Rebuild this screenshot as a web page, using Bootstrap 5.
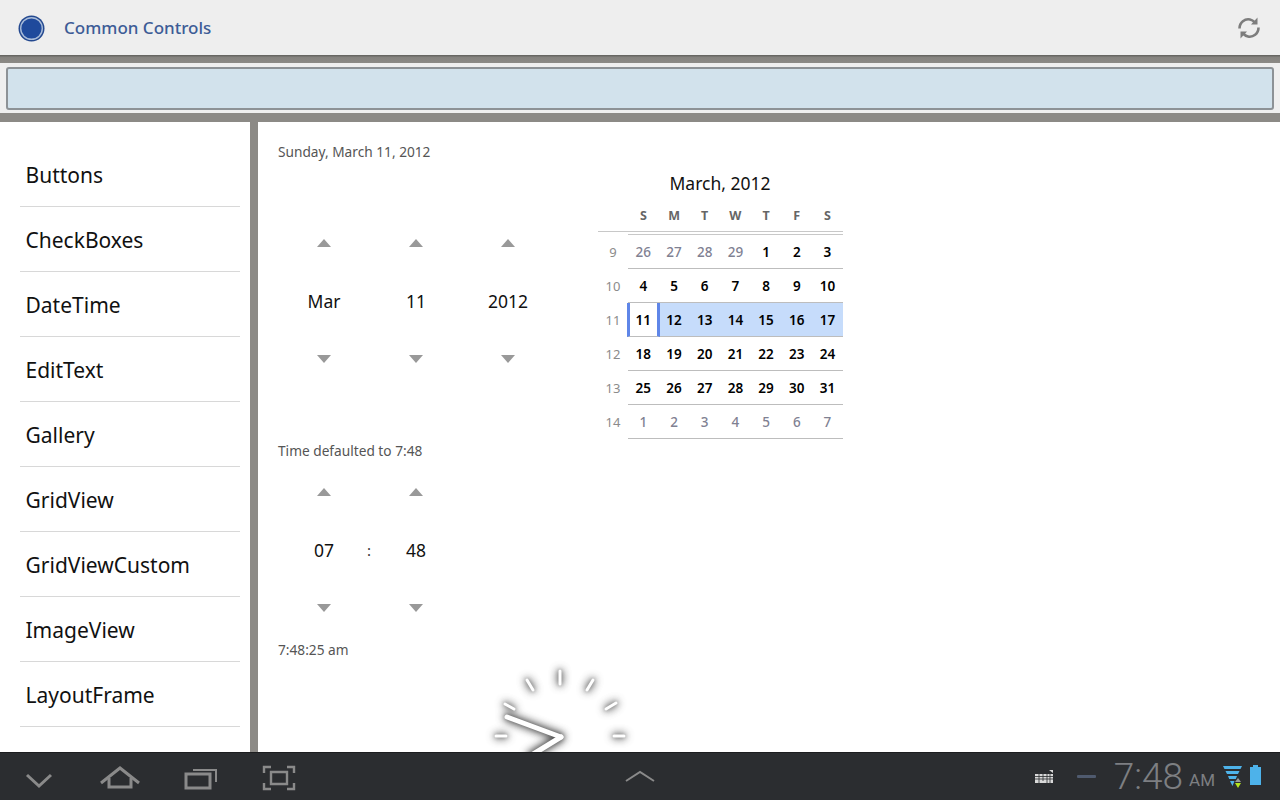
<!DOCTYPE html>
<html lang="en">
<head>
    <meta charset="UTF-8">
    <meta name="viewport" content="width=device-width, initial-scale=1.0">
    <title>Common Controls</title>
    <link href="https://cdn.jsdelivr.net/npm/bootstrap@5.3.2/dist/css/bootstrap.min.css" rel="stylesheet">
    <style>
        html, body { height: 100%; }
        body {
            height: 800px;
            overflow: hidden;
            background: #fff;
            font-family: "Noto Sans", "Open Sans", sans-serif;
            color: #111;
        }
        .app-bar { height: 55px; background: #eeeeee; padding: 1px 19px 0 18px; }
        .app-title { font-size: 17px; font-weight: 500; color: #3d5c96; margin-left: 19px; }
        .band-dark { height: 8px; background: linear-gradient(#5f5e5b, #85837f 30%, #8c8a86); }
        .field-wrap { background: #efefef; padding: 4px 6px 3px; }
        .blue-field {
            height: 43px;
            background: #d2e2ec;
            border: 2px solid #8d9296;
            border-radius: 3px;
        }
        .band-mid { height: 9px; background: #8c8a86; }
        .main-area { height: 630px; overflow: hidden; }
        .menu-col { width: 250px; padding: 20px 10px 0 20px; overflow: hidden; flex: none; }
        .menu-item {
            height: 65px;
            padding: 3px 0 0 5.5px;
            border: 0;
            border-bottom: 1px solid #d8d8d8;
            border-radius: 0;
            font-size: 21px;
            color: #111;
            display: flex;
            align-items: center;
            white-space: nowrap;
        }
        .menu-rule { width: 8px; background: #8c8a86; flex: none; }
        .form-col { width: 340px; padding: 20px 0 0 20px; flex: none; }
        .small-label { font-size: 13.7px; line-height: 20px; color: #555; }
        .spin-row { height: 279px; }
        .spin-row.time-spin { height: 179px; }
        .spin-col { width: 92px; padding-top: 77px; text-align: center; flex: none; }
        .time-spin .spin-col { padding-top: 27px; }
        .spin-text { font-size: 17.5px; line-height: 24px; margin: 42px 0; color: #111; height: 24px; }
        .arrow-up, .arrow-dn { width: 14px; height: 8px; display: block; margin: 0 auto; background: #999; }
        .arrow-up { clip-path: polygon(50% 0, 100% 100%, 0 100%); }
        .arrow-dn { clip-path: polygon(0 0, 100% 0, 50% 100%); }
        .colon-mark { position: relative; }
        .colon-mark::after {
            content: ":";
            position: absolute;
            right: -1px;
            top: 79px;
            font-size: 15px;
            line-height: 20px;
            color: #333;
        }
        .clock-face { display: block; margin-left: 202px; overflow: hidden; }
        .clock-face g { filter: drop-shadow(0 0 4px #333) drop-shadow(0 0 2px #888); }
        .cal-col { width: 245px; padding-top: 49px; flex: none; }
        .cal-title { font-size: 17.5px; line-height: 24px; text-align: center; margin-left: -1px; margin-bottom: 9px; }
        .cal-grid {
            display: grid;
            grid-template-columns: 30px repeat(7, 30.7px);
        }
        .cal-head {
            font-size: 12.5px;
            font-weight: 700;
            color: #666;
            text-align: center;
            line-height: 20px;
            padding-top: 2px;
            padding-bottom: 5px;
            border-bottom: 1px solid #c8c8c8;
        }
        .cal-rule { height: 3px; border-bottom: 1px solid #c8c8c8; margin-left: 30px; }
        .cal-wk { font-size: 13px; color: #8b8b8b; text-align: center; line-height: 34px; height: 34px; }
        .cal-day {
            font-size: 13.5px;
            font-weight: 600;
            color: #000;
            text-align: center;
            line-height: 33px;
            padding-top: 1px;
            height: 34px;
            border-bottom: 1px solid #bdbdbd;
        }
        .cal-day.out { color: #7f8192; font-weight: 500; }
        .cal-day.sel { background: #c6dcfb; }
        .cal-day.cur {
            position: relative;
            z-index: 1;
            background: #fff;
            border-left: 3px solid #5f86e8;
            border-right: 3px solid #5f86e8;
            margin-left: -1px;
            margin-right: -1px;
        }
        .sys-bar { height: 48px; background: #2b2d30; border-top: 1px solid #1c1d1f; padding: 0 19px 0 25px; flex: none; }
        .sys-left { width: 271px; }
        .sys-up { margin-left: 329px; }
        .sys-minus { margin-left: 23px; }
        .sys-clock { font-family: Roboto, "Noto Sans", sans-serif; font-weight: 300; font-size: 37px; color: #7d7f82; line-height: 48px; margin-left: 18px; }
        .sys-ampm { font-family: Roboto, "Noto Sans", sans-serif; font-size: 17px; color: #7d7f82; margin-left: 6px; margin-top: 9px; }
        .sys-battery { margin-left: 7px; margin-top: -3px; }
    </style>
</head>
<body class="d-flex flex-column">
    <nav class="app-bar d-flex align-items-center">
        <svg width="27" height="27" viewBox="0 0 27 27">
            <circle cx="13.5" cy="13.5" r="13" fill="#23488f"/>
            <circle cx="13.5" cy="13.5" r="10.8" fill="#1f4a9c" stroke="#a9bcd9" stroke-width="1.4"/>
        </svg>
        <span class="app-title">Common Controls</span>
        <svg class="ms-auto" width="24" height="24" viewBox="0 0 24 24" fill="none" stroke="#7d7d7d" stroke-width="2.6">
            <path d="M2.5 12.5 C2.5 6 8 2.5 13 3.5 C15 3.9 16.5 5 18 6.5"/>
            <path d="M21.5 11.5 C21.5 18 16 21.5 11 20.5 C9 20.1 7.5 19 6 17.5"/>
            <path d="M20.5 1.5 V8.5 H14" fill="#7d7d7d" stroke="none"/>
            <path d="M3.5 22.5 V15.5 H10" fill="#7d7d7d" stroke="none"/>
        </svg>
    </nav>
    <div class="band-dark"></div>
    <div class="field-wrap"><div class="blue-field"></div></div>
    <div class="band-mid"></div>

    <div class="main-area d-flex">
        <div class="menu-col">
            <div class="list-group list-group-flush">
                <div class="list-group-item menu-item">Buttons</div>
                <div class="list-group-item menu-item">CheckBoxes</div>
                <div class="list-group-item menu-item">DateTime</div>
                <div class="list-group-item menu-item">EditText</div>
                <div class="list-group-item menu-item">Gallery</div>
                <div class="list-group-item menu-item">GridView</div>
                <div class="list-group-item menu-item">GridViewCustom</div>
                <div class="list-group-item menu-item">ImageView</div>
                <div class="list-group-item menu-item">LayoutFrame</div>
                <div class="list-group-item menu-item">LayoutRelative</div>
            </div>
        </div>
        <div class="menu-rule"></div>

        <div class="form-col">
            <div class="small-label">Sunday, March 11, 2012</div>
            <div class="d-flex spin-row">
                <div class="spin-col"><span class="arrow-up"></span><div class="spin-text">Mar</div><span class="arrow-dn"></span></div>
                <div class="spin-col"><span class="arrow-up"></span><div class="spin-text">11</div><span class="arrow-dn"></span></div>
                <div class="spin-col"><span class="arrow-up"></span><div class="spin-text">2012</div><span class="arrow-dn"></span></div>
            </div>
            <div class="small-label">Time defaulted to 7:48</div>
            <div class="d-flex spin-row time-spin">
                <div class="spin-col colon-mark"><span class="arrow-up"></span><div class="spin-text">07</div><span class="arrow-dn"></span></div>
                <div class="spin-col"><span class="arrow-up"></span><div class="spin-text">48</div><span class="arrow-dn"></span></div>
            </div>
            <div class="small-label">7:48:25 am</div>
            <svg class="clock-face" width="160" height="100" viewBox="480 660 160 100">
                <g stroke="#fff" stroke-linecap="round">
                    <line x1="560" y1="671" x2="560" y2="684" stroke-width="3"/>
                    <line x1="527" y1="680" x2="533" y2="690" stroke-width="3"/>
                    <line x1="593" y1="680" x2="587" y2="690" stroke-width="3"/>
                    <line x1="505" y1="704" x2="514" y2="709" stroke-width="3"/>
                    <line x1="616" y1="703" x2="606" y2="709" stroke-width="3"/>
                    <line x1="496" y1="736" x2="506" y2="736" stroke-width="3"/>
                    <line x1="614" y1="736" x2="624" y2="736" stroke-width="3"/>
                    <line x1="507" y1="717" x2="561" y2="737" stroke-width="5"/>
                    <line x1="561" y1="737" x2="530" y2="756" stroke-width="5"/>
                </g>
            </svg>
        </div>

        <div class="cal-col">
            <div class="cal-title">March, 2012</div>
            <div class="cal-grid">
                <div class="cal-head"></div><div class="cal-head">S</div><div class="cal-head">M</div><div class="cal-head">T</div><div class="cal-head">W</div><div class="cal-head">T</div><div class="cal-head">F</div><div class="cal-head">S</div>
            </div>
            <div class="cal-rule"></div>
            <div class="cal-grid">
                <div class="cal-wk">9</div><div class="cal-day out">26</div><div class="cal-day out">27</div><div class="cal-day out">28</div><div class="cal-day out">29</div><div class="cal-day">1</div><div class="cal-day">2</div><div class="cal-day">3</div>
                <div class="cal-wk">10</div><div class="cal-day">4</div><div class="cal-day">5</div><div class="cal-day">6</div><div class="cal-day">7</div><div class="cal-day">8</div><div class="cal-day">9</div><div class="cal-day">10</div>
                <div class="cal-wk">11</div><div class="cal-day cur">11</div><div class="cal-day sel">12</div><div class="cal-day sel">13</div><div class="cal-day sel">14</div><div class="cal-day sel">15</div><div class="cal-day sel">16</div><div class="cal-day sel">17</div>
                <div class="cal-wk">12</div><div class="cal-day">18</div><div class="cal-day">19</div><div class="cal-day">20</div><div class="cal-day">21</div><div class="cal-day">22</div><div class="cal-day">23</div><div class="cal-day">24</div>
                <div class="cal-wk">13</div><div class="cal-day">25</div><div class="cal-day">26</div><div class="cal-day">27</div><div class="cal-day">28</div><div class="cal-day">29</div><div class="cal-day">30</div><div class="cal-day">31</div>
                <div class="cal-wk">14</div><div class="cal-day out">1</div><div class="cal-day out">2</div><div class="cal-day out">3</div><div class="cal-day out">4</div><div class="cal-day out">5</div><div class="cal-day out">6</div><div class="cal-day out">7</div>
            </div>
        </div>
    </div>

    <div class="sys-bar d-flex align-items-center">
        <div class="sys-left d-flex align-items-center">
            <svg width="271" height="28" viewBox="25 762 271 28" fill="none" stroke="#8a8a8a" stroke-width="3">
                <path d="M27 774 L39 785 L51 774"/>
                <path d="M101 782 L120 767 L139 782"/>
                <path d="M109 777 V786 H131 V777"/>
                <path d="M186 773 H210 V787 H186 Z"/>
                <path d="M193 769 H216 V781" stroke-width="2"/>
                <path d="M264 772 V766 H271 M287 766 H294 V772 M264 782 V788 H271 M287 788 H294 V782" stroke-width="2.4"/>
                <path d="M271 771 H287 V783 H271 Z" stroke-width="2.4"/>
            </svg>
        </div>
        <svg class="sys-up" width="30" height="13" viewBox="0 0 30 13" fill="none" stroke="#8a8a8a" stroke-width="2"><path d="M1 11 L15 2 L29 11"/></svg>
        <svg class="ms-auto" width="20" height="16" viewBox="0 0 20 16" fill="#d9d9d9">
            <path d="M15 1 L19 1 L19 4 Z"/>
            <rect x="1" y="5" width="18" height="9" fill="#d9d9d9"/>
            <path d="M1 7.5 H19 M1 10 H19 M5 5 V14 M9 5 V12 M13 5 V14 M16 5 V14" stroke="#2b2d30" stroke-width="0.8"/>
        </svg>
        <svg class="sys-minus" width="19" height="3" viewBox="0 0 19 3"><rect width="19" height="3" rx="1" fill="#4f5a6e"/></svg>
        <span class="sys-clock">7:48</span>
        <span class="sys-ampm">AM</span>
        <svg class="ms-2" width="20" height="24" viewBox="0 0 20 24">
            <path d="M0 1 H19 L17.5 4 H1.5 Z M2.5 6 H16.5 L15 9 H4 Z M5 11 H14 L12.8 14 H6.2 Z M7 16 H11.5 L9.5 21 Z" fill="#4eb3ea"/>
            <path d="M12 17 L15 13 L18 17 Z" fill="#9a9a9a"/>
            <path d="M12 18 H18 L15 23 Z" fill="#b4e61e"/>
        </svg>
        <svg class="sys-battery" width="11" height="20" viewBox="0 0 11 20"><path d="M3 0 H8 V2 H11 V20 H0 V2 H3 Z" fill="#4db2ea"/></svg>
    </div>
</body>
</html>
